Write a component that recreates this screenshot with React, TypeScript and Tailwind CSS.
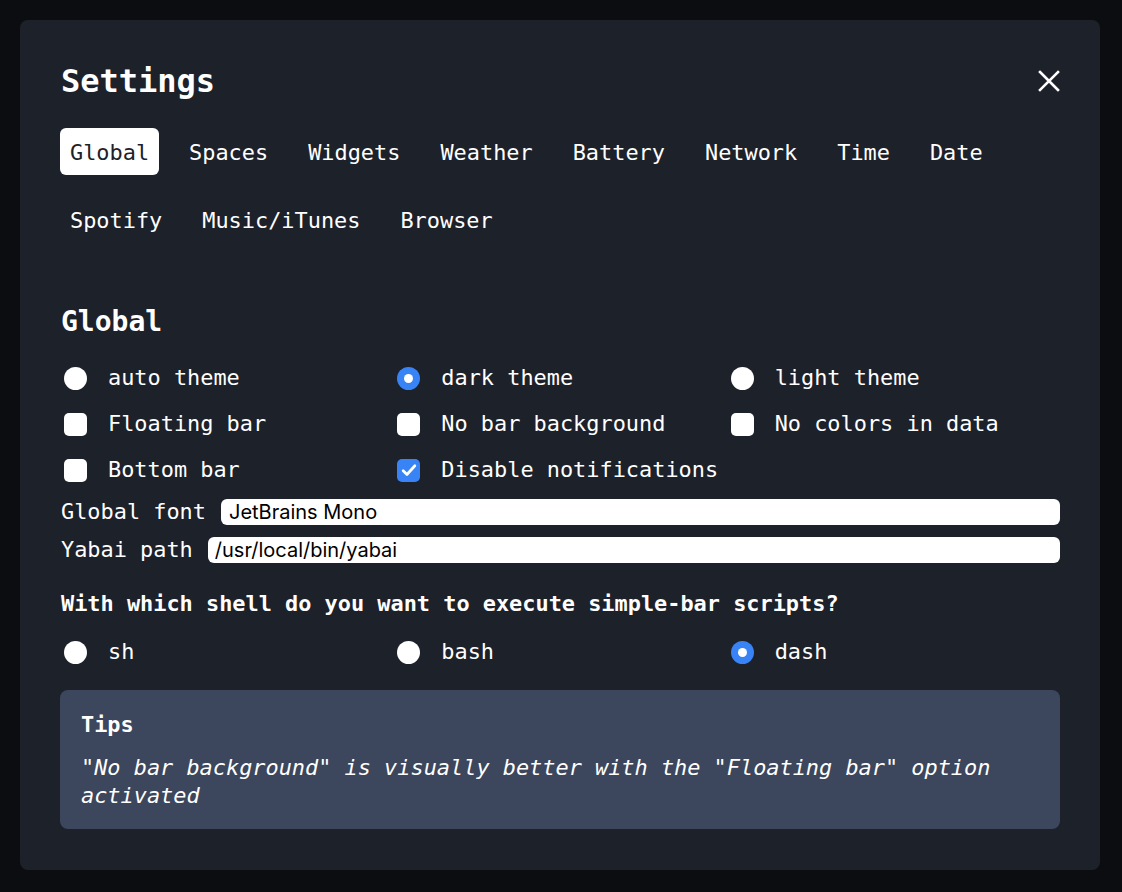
import { useState } from 'react';

const TABS = ['Global', 'Spaces', 'Widgets', 'Weather', 'Battery', 'Network', 'Time', 'Date', 'Spotify', 'Music/iTunes', 'Browser'];

function Radio({ checked, label }: { checked?: boolean; label: string }) {
  return (
    <label className="flex items-center h-[46px]">
      <span
        className={`ml-[4px] w-[23px] h-[23px] rounded-full flex items-center justify-center shrink-0 ${checked ? 'bg-[#3884f6]' : 'bg-white'}`}
      >
        {checked && <span className="w-[9px] h-[9px] rounded-full bg-white" />}
      </span>
      <span className="ml-[21px]">{label}</span>
    </label>
  );
}

function Check({ checked, label }: { checked?: boolean; label: string }) {
  return (
    <label className="flex items-center h-[46px]">
      <span
        className={`ml-[4px] w-[23px] h-[23px] rounded-[5px] flex items-center justify-center shrink-0 ${checked ? 'bg-[#3884f6]' : 'bg-white'}`}
      >
        {checked && (
          <svg width="18" height="18" viewBox="0 0 16 16" fill="none">
            <path d="M2.8 8.6l3.4 3.4L13.2 4.2" stroke="white" strokeWidth="2.4" strokeLinecap="round" strokeLinejoin="round" />
          </svg>
        )}
      </span>
      <span className="ml-[21px]">{label}</span>
    </label>
  );
}

function App() {
  const [tab, setTab] = useState('Global');

  return (
    <div
      className="min-h-screen bg-[#0b0d11] p-[20px] text-[21.9px] text-white"
      style={{ fontFamily: '"DejaVu Sans Mono", "Liberation Mono", monospace' }}
    >
      <div className="bg-[#1d212a] rounded-[8px] px-[40px] pt-[41px] pb-[40px] w-[1080px] h-[850px]">
        {/* Header */}
        <div className="flex items-center justify-between h-[40px]">
          <h1 className="text-[32px] font-bold leading-[40px] ml-[1px]">Settings</h1>
          <button className="w-[30px] h-[30px] flex items-center justify-center -mr-[4px]">
            <svg width="22" height="22" viewBox="0 0 22 22" fill="none">
              <path d="M2 2L20 20M20 2L2 20" stroke="white" strokeWidth="2.6" strokeLinecap="square" />
            </svg>
          </button>
        </div>

        {/* Tabs */}
        <div className="flex flex-wrap gap-x-[20px] gap-y-[21px] mt-[27px] w-[940px]">
          {TABS.map((t) => (
            <button
              key={t}
              onClick={() => setTab(t)}
              className={`h-[47px] px-[10px] pt-[2px] rounded-[6px] leading-none ${tab === t ? 'bg-white text-[#1d212a]' : 'text-white'}`}
            >
              {t}
            </button>
          ))}
        </div>

        {/* Global section */}
        <h2 className="text-[28px] font-bold leading-[34px] mt-[62px] ml-[1px]">Global</h2>
        <div className="grid grid-cols-3 mt-[16px]">
          <Radio label="auto theme" />
          <Radio label="dark theme" checked />
          <Radio label="light theme" />
          <Check label="Floating bar" />
          <Check label="No bar background" />
          <Check label="No colors in data" />
          <Check label="Bottom bar" />
          <Check label="Disable notifications" checked />
        </div>

        <div className="flex items-center h-[38px]">
          <span className="ml-[1px] mr-[15px] whitespace-nowrap">Global font</span>
          <input
            readOnly
            value="JetBrains Mono"
            className="flex-1 h-[26px] rounded-[6px] bg-white text-black text-[20px] px-[8px] outline-none"
            style={{ fontFamily: 'Inter, "Liberation Sans", sans-serif' }}
          />
        </div>
        <div className="flex items-center h-[38px]">
          <span className="ml-[1px] mr-[15px] whitespace-nowrap">Yabai path</span>
          <input
            readOnly
            value="/usr/local/bin/yabai"
            className="flex-1 h-[26px] rounded-[6px] bg-white text-black text-[20px] px-[7px] outline-none"
            style={{ fontFamily: 'Inter, "Liberation Sans", sans-serif' }}
          />
        </div>

        <p className="font-bold leading-[30px] mt-[20px] ml-[1px]">With which shell do you want to execute simple-bar scripts?</p>
        <div className="grid grid-cols-3 mt-[10px]">
          <Radio label="sh" />
          <Radio label="bash" />
          <Radio label="dash" checked />
        </div>

        {/* Tips */}
        <div className="bg-[#3c465c] rounded-[8px] mt-[15px] px-[21px] pt-[20px] pb-[19px]">
          <div className="font-bold leading-[30px]">Tips</div>
          <p className="italic leading-[28px] mt-[14px]">
            "No bar background" is visually better with the "Floating bar" option activated
          </p>
        </div>
      </div>
    </div>
  );
}

export default App;
